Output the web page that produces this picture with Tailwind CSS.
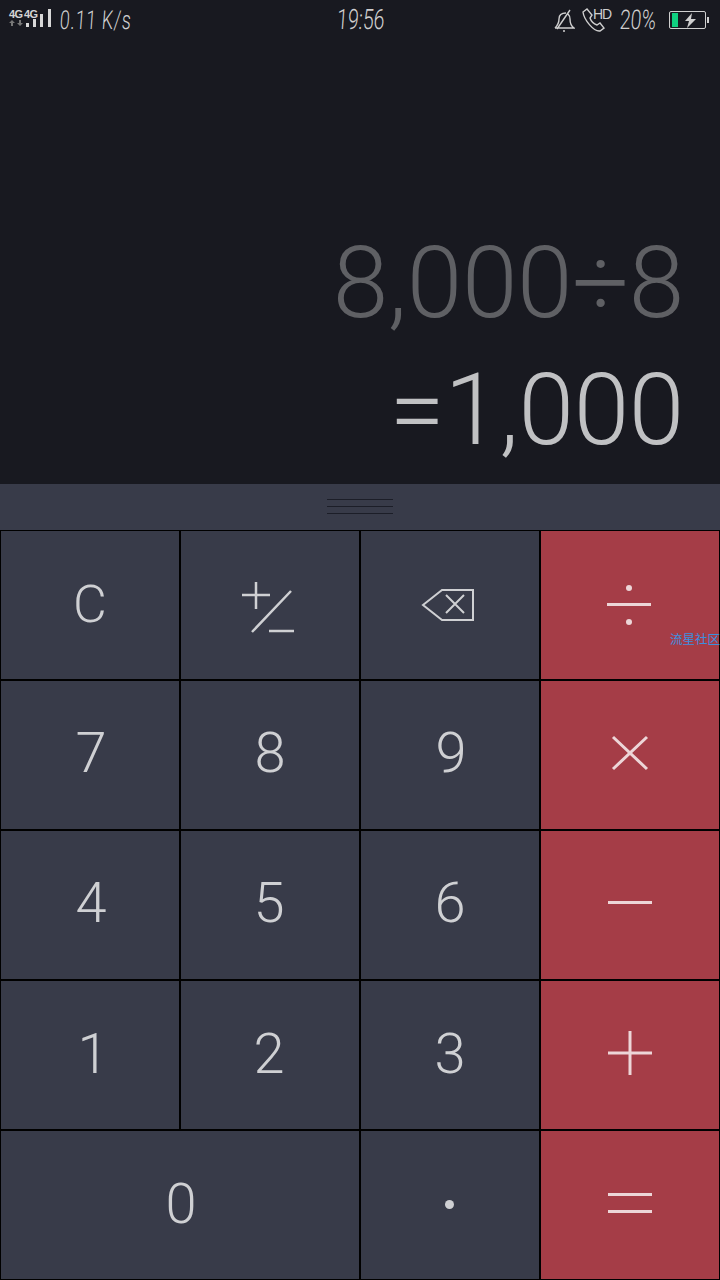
<!DOCTYPE html>
<html lang="en">
<head>
    <meta charset="UTF-8">
    <meta name="viewport" content="width=device-width, initial-scale=1.0">
    <title>Calculator</title>
    <script src="https://cdn.jsdelivr.net/npm/@tailwindcss/browser@4"></script>
</head>
<body class="bg-[#181920] font-['Roboto',sans-serif]">
<div class="w-[720px] h-[1280px] flex flex-col overflow-hidden">

    <!-- Status bar -->
    <div class="h-[40px] flex items-center text-[#cfcfcf]">
        <div class="flex-1 flex items-center pl-[9px]">
            <div class="flex flex-col w-[15px] h-[18px] font-['Liberation_Sans',sans-serif] text-[11px] font-bold leading-[10px] text-[#d4d4d4] mb-[4px]">
                <span class="tracking-[-0.5px]">4G</span>
                <svg class="mt-[1px]" width="14" height="7" viewBox="0 0 14 7" fill="#777"><path d="M3 0l3 3H4v3H2V3H0zM11 6L8 3h2V0h2v3h2z"/></svg>
            </div>
            <div class="relative w-[28px] h-[18px] mb-[4px]">
                <span class="absolute left-0 top-0 font-['Liberation_Sans',sans-serif] text-[11px] font-bold leading-[10px] tracking-[-0.5px] text-[#d4d4d4]">4G</span>
                <svg class="absolute left-0 top-0" width="28" height="18" viewBox="0 0 28 18" fill="#d8d8d8"><path d="M2 14h3v4H2zM9 10h3v8H9zM16 5h3v13h-3zM24 0h3v18h-3z"/></svg>
            </div>
            <span class="block w-[71px] ml-[8px] text-[26px] leading-[30px] font-light tracking-[1px] whitespace-nowrap origin-left scale-x-[.69] -skew-x-6">0.11 K/s</span>
        </div>
        <div class="w-[47px] -ml-[4px] mr-[4px] whitespace-nowrap text-[28px] leading-[30px] font-light origin-left scale-x-[.7] -skew-x-6">19:56</div>
        <div class="flex-1 flex items-center justify-end">
            <svg width="22" height="24" viewBox="0 0 22 24" fill="none" stroke="#cfcfcf" stroke-width="1.4" class="mr-[6px]">
                <path d="M2 20c3-3 4-5 4-9 0-4 3-6 7-6M2 20h19c-3-2-4-5-4-9 0-2-1-4-2-5M17 2L4 21M10 23h2"/>
            </svg>
            <div class="relative w-[30px] h-[26px] mr-[9px]">
                <svg width="30" height="26" viewBox="0 0 30 26" fill="none" stroke="#cfcfcf" stroke-width="1.4">
                    <path d="M2 5l4-3 5 6-2 3c1 3 4 6 7 7l3-2 4 5-4 3C13 25 3 13 2 5z"/>
                </svg>
                <span class="absolute left-[12px] top-0 font-['Liberation_Sans',sans-serif] text-[14px] leading-[14px] tracking-[-1px]">HD</span>
            </div>
            <span class="block w-[36px] mr-[13px] text-[27px] leading-[30px] font-light whitespace-nowrap origin-left scale-x-[.72] -skew-x-6">20%</span>
            <div class="w-[37px] h-[18px] border border-[#cfcfcf] rounded-[2px] flex items-center pl-[2px]">
                <div class="w-[6px] h-[14px] bg-[#10d080]"></div>
                <svg class="ml-[7px]" width="11" height="15" viewBox="0 0 11 15" fill="#cfcfcf"><path d="M7 0L0 8h4L2 15l9-9H6z"/></svg>
            </div>
            <div class="w-[2px] h-[6px] bg-[#cfcfcf] ml-[1px] mr-[11px]"></div>
        </div>
    </div>

    <!-- Display -->
    <div class="h-[444px] flex flex-col justify-end items-end pr-[36px] pb-[11px] font-light">
        <div class="text-[100px] leading-[127px] text-[#5f6064] tracking-[-0.3px]">8,000÷8</div>
        <div class="text-[100px] leading-[127px] text-[#c0c1c3] tracking-[-0.3px]">=1,000</div>
    </div>

    <!-- Drag handle -->
    <div class="h-[46px] bg-[#383b49] flex flex-col items-center justify-center gap-[6px] pb-[1px]">
        <div class="w-[66px] h-px bg-[#1c1e28]"></div>
        <div class="w-[66px] h-px bg-[#1c1e28]"></div>
        <div class="w-[66px] h-px bg-[#1c1e28]"></div>
    </div>

    <!-- Keypad -->
    <div class="grid grid-cols-4 grid-rows-5 h-[750px] bg-black gap-[2px] p-px text-[#cfd0d3] text-[56px] font-light">
        <button class="bg-[#383b49] flex items-center justify-center text-[52px]">C</button>
        <button class="bg-[#383b49] flex items-center justify-center">
            <svg width="60" height="60" viewBox="0 0 60 60" fill="none" stroke="#cfd0d3" stroke-width="2.5"><path d="M2 20h28M16 7v27M51 16L12 57M29 56h25"/></svg>
        </button>
        <button class="bg-[#383b49] flex items-center justify-center pr-[4px]">
            <svg width="54" height="34" viewBox="0 0 54 34" fill="none" stroke="#cfd0d3" stroke-width="2"><path d="M2 17L21 2h31v30H21zM25 7l18 18M43 7L25 25"/></svg>
        </button>
        <button class="bg-[#a53d47] flex items-center justify-center relative pr-[2px]">
            <svg width="46" height="40" viewBox="0 0 46 40" fill="#edd6d8"><circle cx="23" cy="3" r="3"/><rect x="1" y="18" width="44" height="3"/><circle cx="23" cy="37" r="3"/></svg>
            <span class="absolute left-[129px] top-[101px] text-[12.5px] leading-[14px] font-normal text-[#3a90e0] font-['Noto_Sans_CJK_SC',sans-serif] whitespace-nowrap">流星社区</span>
        </button>

        <button class="bg-[#383b49] flex items-center justify-center pb-[4px] pl-[2px]">7</button>
        <button class="bg-[#383b49] flex items-center justify-center pb-[4px]">8</button>
        <button class="bg-[#383b49] flex items-center justify-center pb-[4px] pl-[2px]">9</button>
        <button class="bg-[#a53d47] flex items-center justify-center pb-[4px]">
            <svg width="40" height="36" viewBox="0 0 40 36" fill="none" stroke="#edd6d8" stroke-width="3"><path d="M3 2l34 32M37 2L3 34"/></svg>
        </button>

        <button class="bg-[#383b49] flex items-center justify-center pb-[5px] pl-[2px]">4</button>
        <button class="bg-[#383b49] flex items-center justify-center pb-[5px] pr-[2px]">5</button>
        <button class="bg-[#383b49] flex items-center justify-center pb-[5px]">6</button>
        <button class="bg-[#a53d47] flex items-center justify-center pb-[6px]">
            <div class="w-[44px] h-[3px] bg-[#edd6d8]"></div>
        </button>

        <button class="bg-[#383b49] flex items-center justify-center pb-[3px] pl-[6px]">1</button>
        <button class="bg-[#383b49] flex items-center justify-center pb-[3px] pr-[2px]">2</button>
        <button class="bg-[#383b49] flex items-center justify-center pb-[3px]">3</button>
        <button class="bg-[#a53d47] flex items-center justify-center pb-[4px]">
            <svg width="44" height="44" viewBox="0 0 44 44" fill="none" stroke="#edd6d8" stroke-width="3"><path d="M0 22h44M22 0v44"/></svg>
        </button>

        <button class="bg-[#383b49] col-span-2 flex items-center justify-center pb-[3px] pl-[2px]">0</button>
        <button class="bg-[#383b49] flex items-center justify-center pb-[2px] pr-[2px]">
            <div class="w-[9px] h-[9px] rounded-full bg-[#cfd0d3]"></div>
        </button>
        <button class="bg-[#a53d47] flex items-center justify-center pb-[4px]">
            <svg width="44" height="20" viewBox="0 0 44 20" fill="#edd6d8"><rect y="0" width="44" height="3"/><rect y="17" width="44" height="3"/></svg>
        </button>
    </div>
</div>
</body>
</html>
